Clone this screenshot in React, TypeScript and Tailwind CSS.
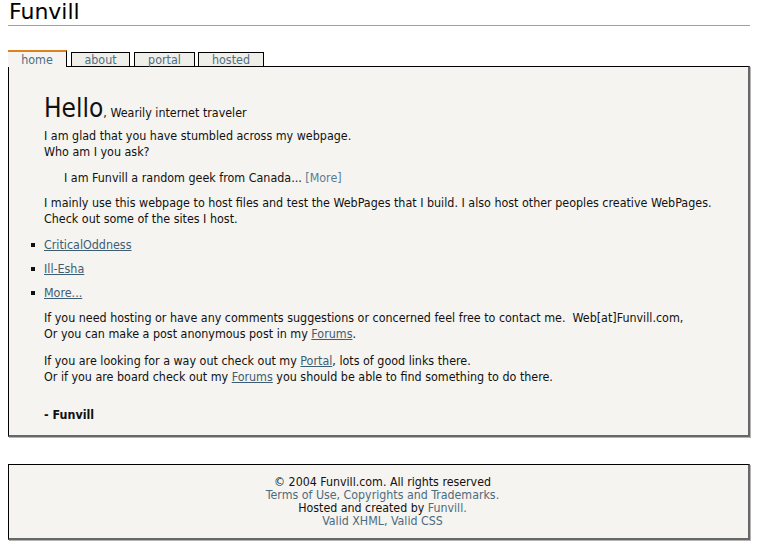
import React from "react";

function Tab({ label, active, className }: { label: string; active?: boolean; className: string }) {
  if (active) {
    return (
      <div
        className={`relative z-10 -mb-px h-[17px] border-t-2 border-r border-t-[#e0801e] border-r-black bg-[#f5f4f0] text-center leading-[15px] text-[#4d6d83] ${className}`}
      >
        {label}
      </div>
    );
  }
  return (
    <div
      className={`h-[14px] border-x border-t border-black bg-[#efefe9] text-center leading-[14px] text-[#4d6d83] ${className}`}
    >
      {label}
    </div>
  );
}

function A({ children }: { children: React.ReactNode }) {
  return <a className="text-[#3f5d72] underline decoration-[#3f5d72]">{children}</a>;
}

export default function App() {
  return (
    <div className="min-h-[558px] bg-white px-2 font-['DejaVu_Sans_Condensed','DejaVu_Sans',sans-serif] text-[12.4px] leading-[16px] text-[#111]">
      {/* Header */}
      <div className="border-b border-[#86aabb] pb-px pl-px font-['DejaVu_Sans',sans-serif] text-[22px] leading-[24px] text-black">
        Funvill
      </div>

      {/* Tabs */}
      <div className="mt-[24px] flex items-end">
        <Tab label="home" active className="w-[59px]" />
        <Tab label="about" className="ml-[4px] w-[59px]" />
        <Tab label="portal" className="ml-[4px] w-[61px]" />
        <Tab label="hosted" className="ml-[3px] w-[66px]" />
      </div>

      {/* Main box */}
      <div className="border-l border-t border-b-2 border-r-2 border-l-black border-t-black border-b-[#686868] border-r-[#686868] bg-[#f5f4f0] pb-[12px] pl-[35px] pr-[35px] pt-[26px] shadow-[1px_1px_0_#b4b4b4]">
        <div className="h-[30px] leading-[30px] whitespace-nowrap">
          <span className="text-[26px]">Hello</span>
          <span>, Wearily internet traveler</span>
        </div>

        <p className="mt-[5px] whitespace-nowrap">
          I am glad that you have stumbled across my webpage.
          <br />
          Who am I you ask?
        </p>

        <p className="mt-[10px] ml-[20px] whitespace-nowrap">
          I am Funvill a random geek from Canada... <span className="text-[#5b7b92]">[More]</span>
        </p>

        <p className="mt-[9px] whitespace-nowrap">
          I mainly use this webpage to host files and test the WebPages that I build. I also host other peoples creative WebPages.
          <br />
          Check out some of the sites I host.
        </p>

        <ul className="mt-[10px] flex flex-col gap-[8px]">
          {["CriticalOddness", "Ill-Esha", "More..."].map((t) => (
            <li key={t} className="-ml-[13px] flex items-center">
              <span className="mr-[9px] h-[4px] w-[4px] bg-[#111]" />
              <A>{t}</A>
            </li>
          ))}
        </ul>

        <p className="mt-[9px] whitespace-nowrap">
          If you need hosting or have any comments suggestions or concerned feel free to contact me.&nbsp; Web[at]Funvill.com,
          <br />
          Or you can make a post anonymous post in my <A>Forums</A>.
        </p>

        <p className="mt-[11px] whitespace-nowrap">
          If you are looking for a way out check out my <A>Portal</A>, lots of good links there.
          <br />
          Or if you are board check out my <A>Forums</A> you should be able to find something to do there.
        </p>

        <p className="mt-[22px] font-bold">- Funvill</p>
      </div>

      {/* Footer */}
      <div className="mt-[27px] border-l border-t border-b-2 border-r-2 border-l-black border-t-black border-b-[#686868] border-r-[#686868] bg-[#f5f4f0] pb-[10px] pt-[11px] text-center text-[12.3px] leading-[13px] shadow-[1px_1px_0_#b4b4b4]">
        <div className="pl-[8px]">© 2004 Funvill.com. All rights reserved</div>
        <div className="pl-[8px] text-[#4f6b7e]">Terms of Use, Copyrights and Trademarks.</div>
        <div className="pl-[8px]">
          Hosted and created by <span className="text-[#4f6b7e]">Funvill.</span>
        </div>
        <div className="pl-[8px] text-[#4f6b7e]">Valid XHML, Valid CSS</div>
      </div>
    </div>
  );
}
